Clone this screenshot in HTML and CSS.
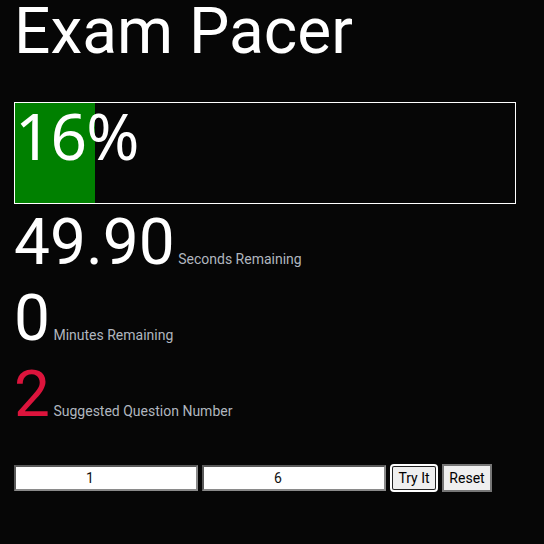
FILE: index.html
```html
<!DOCTYPE html>
<html>
<head>
<meta charset="utf-8">
<link rel="stylesheet" href="styles.css">
</head>
<body>
<div class="page">
  <h1 class="title">Exam Pacer</h1>
  <div class="progress">
    <div class="fill" style="width:16%"></div>
    <div class="pct">16%</div>
  </div>
  <div class="stat"><span class="num">49.90</span> <span class="label">Seconds Remaining</span></div>
  <div class="stat"><span class="num">0</span> <span class="label">Minutes Remaining</span></div>
  <div class="stat"><span class="num red">2</span> <span class="label">Suggested Question Number</span></div>
  <div class="controls">
    <input class="field" type="text" value="1">
    <input class="field" type="text" value="6">
    <button class="btn focused">Try It</button>
    <button class="btn">Reset</button>
  </div>
</div>
</body>
</html>
```

FILE: styles.css
```css
html, body {
  margin: 0;
  padding: 0;
  background: #060606;
}
body {
  font-family: Roboto, "Liberation Sans", sans-serif;
  color: #fff;
}
.page {
  padding: 0 14px;
}
.title {
  margin: 0;
  font-size: 64px;
  font-weight: 400;
  line-height: 64px;
  color: #fff;
}
.progress {
  position: relative;
  margin-top: 38px;
  margin-bottom: 1px;
  width: 500px;
  height: 100px;
  border: 1px solid #fff;
  display: flex;
}
.fill {
  background: #008000;
  height: 100%;
}
.pct {
  position: absolute;
  left: 0;
  top: 0;
  font-family: "Noto Sans", "Open Sans", sans-serif;
  font-size: 64px;
  line-height: 66px;
  letter-spacing: -1px;
  color: #fff;
}
.stat {
  font-size: 14px;
  line-height: 76px;
  height: 76px;
}
.num {
  font-size: 64px;
  color: #fff;
}
.num.red {
  color: #dc143c;
}
.label {
  font-size: 14px;
  color: #b0b6bf;
}
.controls {
  margin-top: 31px;
  display: flex;
  align-items: center;
  gap: 4px;
}
.field {
  box-sizing: border-box;
  width: 184px;
  height: 26px;
  margin: 0;
  border-style: solid;
  border-width: 2px;
  border-color: #5a5a5a #8a8a8a #8a8a8a #5a5a5a;
  background: #fff;
  color: #111;
  font-family: Roboto, sans-serif;
  font-size: 14px;
  text-align: center;
  padding: 0 32px 0 0;
}
.btn {
  box-sizing: border-box;
  height: 28px;
  width: 50px;
  margin: 0;
  padding: 0;
  background: #efefef;
  color: #000;
  border: 2px solid #767676;
  font-family: Roboto, sans-serif;
  font-size: 14px;
}
.btn.focused {
  width: 44px;
  height: 24px;
  margin: 0 2px;
  border-radius: 2px;
  border: 1px solid #222;
  outline: 2px solid #fff;
  outline-offset: 0;
  box-shadow: 0 0 0 1px #000;
}
```
